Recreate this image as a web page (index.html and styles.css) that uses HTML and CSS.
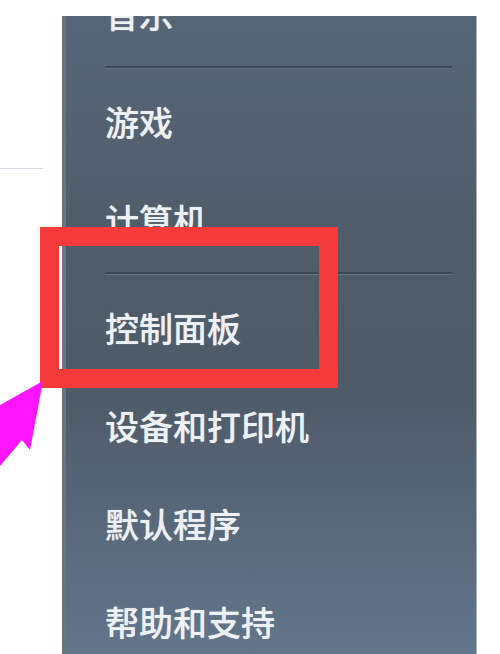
FILE: index.html
```html
<!DOCTYPE html>
<html lang="zh-CN">
<head>
    <meta charset="UTF-8">
    <title>开始菜单</title>
    <link rel="stylesheet" href="styles.css">
</head>
<body>
    <div class="screen">
        <div class="desk">
            <div class="desk-line"></div>
        </div>
        <div class="menu-panel">
            <ul class="menu-list">
                <li class="menu-item">音乐</li>
                <li class="menu-sep"></li>
                <li class="menu-item">游戏</li>
                <li class="menu-item">计算机</li>
                <li class="menu-sep"></li>
                <li class="menu-item">控制面板</li>
                <li class="menu-item">设备和打印机</li>
                <li class="menu-item">默认程序</li>
                <li class="menu-item">帮助和支持</li>
            </ul>
        </div>
        <div class="mark-box"></div>
        <svg class="mark-arrow" width="50" height="90" viewBox="0 0 50 90">
            <polygon points="43,1 30,70 22,60 0,86 0,25" fill="#ff14ff"/>
        </svg>
    </div>
</body>
</html>
```

FILE: styles.css
```css
body {
    margin: 0;
    background: #fff;
    font-family: "Noto Sans CJK SC", "Noto Sans", sans-serif;
}
.screen {
    position: relative;
    width: 500px;
    height: 654px;
    overflow: hidden;
    display: flex;
    background: #fff;
}
.desk {
    width: 62px;
    flex-shrink: 0;
    padding-top: 168px;
}
.desk-line {
    width: 43px;
    height: 1px;
    background: #d3d9e0;
}
.menu-panel {
    margin-top: 16px;
    width: 410px;
    height: 638px;
    border-left: 4px solid #6b747f;
    border-right: 1px solid #a9b2bc;
    background: linear-gradient(180deg, #576677 0%, #4f5c6a 35%, #4e5b69 60%, #5b6c7f 85%, #63758b 100%);
    overflow: hidden;
}
.menu-list {
    list-style: none;
    margin: -52px 0 0 0;
    padding: 0 24px 0 39px;
}
.menu-item {
    height: 98px;
    display: flex;
    align-items: center;
    font-size: 34px;
    font-weight: 500;
    color: #eef1f4;
    text-shadow: 0 0 1px rgba(255, 255, 255, 0.5);
}
.menu-sep {
    height: 10px;
    display: flex;
    flex-direction: column;
    justify-content: center;
}
.menu-sep::before {
    content: "";
    height: 2px;
    background: #3e4955;
    border-bottom: 1px solid #66727f;
}
.mark-box {
    position: absolute;
    left: 40px;
    top: 227px;
    width: 260px;
    height: 123px;
    border: 19px solid #f43a3a;
}
.mark-arrow {
    position: absolute;
    left: 0;
    top: 380px;
}
```
